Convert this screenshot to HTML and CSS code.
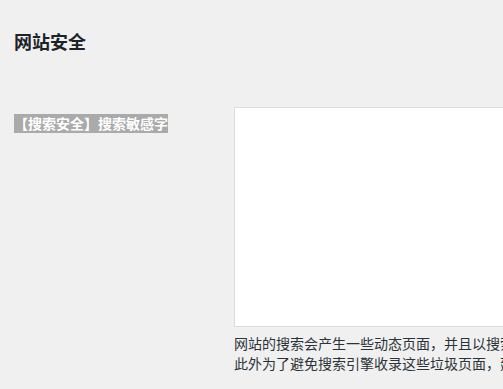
FILE: index.html
```html
<!DOCTYPE html>
<html lang="zh-CN">
<head>
<meta charset="utf-8">
<link rel="stylesheet" href="styles.css">
</head>
<body>
<div class="wrap">
  <h2 class="title">网站安全</h2>
  <div class="form-row">
    <div class="label-col"><span class="label">【搜索安全】搜索敏感字</span></div>
    <div class="field-col">
      <textarea class="field"></textarea>
      <p class="desc">网站的搜索会产生一些动态页面，并且以搜索关键词作为页面标题，可能会被恶意利用。<br>此外为了避免搜索引擎收录这些垃圾页面，建议设置搜索敏感字。</p>
    </div>
  </div>
</div>
</body>
</html>
```
FILE: styles.css
```css
html, body {
  margin: 0;
  padding: 0;
  background: #f0f0f1;
  overflow: hidden;
}
body {
  font-family: "Noto Sans CJK SC", "Noto Sans", sans-serif;
  color: #1d2327;
  font-size: 14px;
  width: 503px;
  height: 389px;
}
.wrap {
  padding: 28px 0 0 14px;
}
.title {
  margin: 0;
  font-size: 18px;
  line-height: 26px;
  font-weight: 700;
}
.form-row {
  margin-top: 53px;
  display: grid;
  grid-template-columns: 220px 400px;
}
.label-col {
  padding-top: 6px;
}
.label {
  background: #aaaaaa;
  color: #ffffff;
  font-weight: 700;
  font-size: 14px;
  line-height: 19px;
  display: inline-block;
  white-space: nowrap;
}
.field-col {
  display: flex;
  flex-direction: column;
}
.field {
  display: block;
  box-sizing: border-box;
  width: 400px;
  height: 220px;
  margin: 0;
  border: 1px solid #dcdcde;
  background: #fff;
  resize: none;
  padding: 0;
}
.desc {
  margin: 6px 0 0;
  font-size: 14px;
  line-height: 20px;
  white-space: nowrap;
  color: #2c3338;
}
```
